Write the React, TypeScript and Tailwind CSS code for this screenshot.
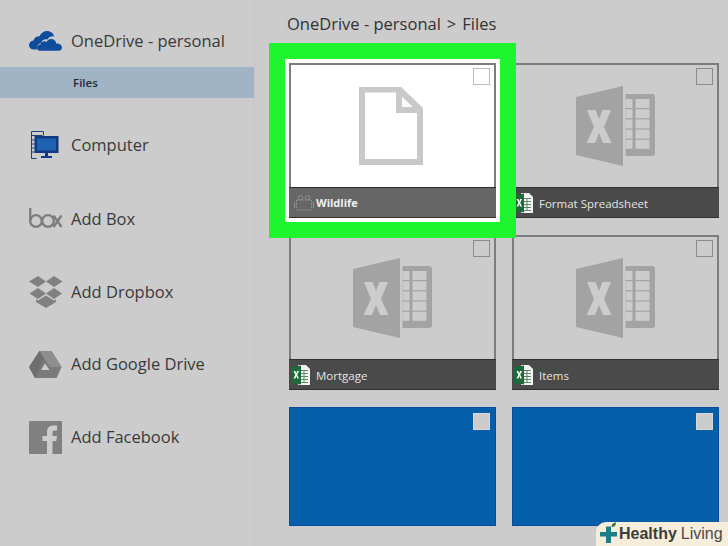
import React from "react";

const Cloud = () => (
  <svg width="33" height="20" viewBox="0 0 33 20" className="shrink-0">
    <path fill="#0f4c9c" d="M5 18.500C1.800 18.500 0 16.500 0 14c0-2.500 2-4.500 4.500-4.600C5.500 6.500 8 5 10.500 5.300 12 2 15 0 18 0c3.500 0 6.500 2.300 7.200 5.500-2.500-.6-5.300.4-6.700 3-2.500-.8-5.800.6-6.500 3.700C9.500 12.500 7.500 15 8 18.500z" />
    <path fill="#0f4c9c" d="M11 19.800c-2 0-3-1.300-3-3 0-2 1.500-3.300 3.500-3.300.4-2.500 3.500-4 6-2.600 1.200-2.500 4-3.600 6.500-2.600 2 .8 3 2.400 3.200 4.200 3-.3 5.800 1.400 5.800 4 0 1.800-1.200 3.300-3.300 3.300z" />
  </svg>
);

const Computer = () => (
  <svg width="30" height="30" viewBox="0 0 30 30" className="shrink-0">
    <path fill="none" stroke="#1c3f73" strokeWidth="1" d="M2.500 28.500V1.500h12v4M2.500 28.500h5M2.500 5.500h11M2.500 10h3M2.500 14h3M2.500 18h3M2.500 22h3" />
    <rect x="5.500" y="6" width="24" height="17" fill="#12397f" />
    <rect x="8" y="8.500" width="19" height="12" fill="#1e62b0" />
    <rect x="16" y="23" width="3" height="3.500" fill="#12397f" />
    <rect x="12" y="26" width="11" height="2" fill="#12397f" />
  </svg>
);

const BoxLogo = () => (
  <svg width="34" height="22" viewBox="0 0 34 22" className="shrink-0">
    <g fill="none" stroke="#7d7d7d" strokeWidth="2.300">
      <path d="M1.200 0v13" />
      <circle cx="7" cy="13" r="5.800" />
      <circle cx="19" cy="13" r="5.800" />
      <path d="M24.500 7.500l8 11.500M32.500 7.500l-8 11.500" />
    </g>
  </svg>
);

const Dropbox = () => (
  <svg width="34" height="32" viewBox="0 0 34 32" className="shrink-0">
    <g fill="#808080">
      <path d="M9 0l8 5.500L9 11 0 5.500zM25 0l8.500 5.500L25 11 17 5.500zM9 12l8 5.500L9 23 .5 17.500zM25 12l8 5.500L25 23l-8-5.500z" />
      <path d="M17 19.500l8 5 2-1.200V26l-10 6-10-6v-2.700l2 1.200z" />
    </g>
  </svg>
);

const Drive = () => (
  <svg width="33" height="28" viewBox="0 0 33 28" className="shrink-0">
    <path fill="#7a7a7a" d="M10.500 0h12l10 16-5 11H6L0 16z" />
    <path fill="#8e8e8e" d="M10.500 0h12l10 16H21z" />
    <path fill="#6f6f6f" d="M0 16L10.500 0 15 8 6 27z" />
    <path fill="#cccccc" d="M16 12.500l4.500 6.500h-8.500z" />
  </svg>
);

const Facebook = () => (
  <svg width="33" height="33" viewBox="0 0 33 33" className="shrink-0">
    <rect width="33" height="33" rx="1" fill="#808080" />
    <path fill="#cccccc" d="M18 33V20h-4.500v-5H18v-4c0-4.500 2.800-6.500 6.500-6.500H28v5h-2.200c-1.800 0-2.300 .8-2.300 2.300V15H28l-.7 5h-3.800v13z" />
  </svg>
);

const ExcelBig = () => (
  <svg width="79" height="80" viewBox="0 0 79 80">
    <g fill="#a3a3a3">
      <path d="M0 11L47 0v80L0 69z" />
      <path d="M49.500 8H76a3 3 0 0 1 3 3v56a3 3 0 0 1-3 3H49.500z" />
    </g>
    <path fill="#cccccc" d="M11 24h8.500l3.500 9 3.500-9H35L28 41l7.500 16H27l-4-10-4 10h-8.500L18 41z" />
    <g fill="#cccccc">
      {[13, 23.200, 33.400, 43.600, 53.800].map((y) => (
        <React.Fragment key={y}>
          <rect x="49.500" y={y} width="7" height="9" />
          <rect x="59.500" y={y} width="14" height="9" />
        </React.Fragment>
      ))}
    </g>
  </svg>
);

const ExcelSmall = () => (
  <svg width="20" height="22" viewBox="0 0 20 22" className="shrink-0">
    <path fill="#f4f4f4" d="M7 1h8l4 4v16H7z" />
    <g fill="#5b8b63">
      <rect x="9" y="6" width="8" height="1" />
      <rect x="9" y="9" width="8" height="1" />
      <rect x="9" y="12" width="8" height="1" />
      <rect x="9" y="15" width="8" height="1" />
      <rect x="9" y="18" width="8" height="1" />
      <rect x="12.500" y="6" width="1" height="13" />
    </g>
    <path fill="#1d6b3a" d="M0 3l10-1.500v19L0 19z" />
    <path fill="#ffffff" d="M2.500 7h1.800l1 2.300L6.300 7h1.700L6.200 10.800 8 14.500H6.300l-1-2.400-1 2.400H2.500l1.900-3.700z" />
  </svg>
);

const Movie = () => (
  <svg width="20" height="16" viewBox="0 0 20 16" className="shrink-0">
    <g fill="none" stroke="#8f8f8f" strokeWidth="1">
      <rect x="2.500" y="5" width="15" height="10" strokeDasharray="2 1" />
      <circle cx="6.500" cy="2.800" r="2.200" />
      <circle cx="13.500" cy="2.800" r="2.200" />
      <path d="M.5 7v6M19.500 7v6" />
    </g>
  </svg>
);

const DocIcon = () => (
  <svg width="64" height="78" viewBox="0 0 64 78">
    <path fill="#c9c9c9" fillRule="evenodd" d="M0 0h42l22 21v57H0zM6 5.500V72h52V26H37V5.500zM43 10v10h11z" />
  </svg>
);

const NavRow = ({ icon, label }: { icon: React.ReactNode; label: string }) => (
  <div className="flex h-[72.6px] items-center">
    <div className="flex w-[71px] justify-start pl-[29px]">{icon}</div>
    <span className="text-[16.500px] leading-none text-[#3a3a3a]">{label}</span>
  </div>
);

const ExcelTile = ({ name }: { name: string }) => (
  <div className="relative flex h-[155px] flex-col border-2 border-b-0 border-[#7d7d7d]">
    <div className="absolute right-[4px] top-[3px] h-[17px] w-[17px] border border-[#8c8c8c]" />
    <div className="flex flex-1 items-center justify-center">
      <ExcelBig />
    </div>
    <div className="-mx-[2px] flex h-[31px] items-center gap-[5px] border-y border-[#303030] bg-[#4a4a4a] pl-[2px]">
      <ExcelSmall />
      <span className="pt-[2px] text-[11.500px] text-[#e4e4e4]">{name}</span>
    </div>
  </div>
);

const BlueTile = () => (
  <div className="relative h-[119px] border border-[#0b4a9e] bg-[#045ea8]">
    <div className="absolute right-[5px] top-[5px] h-[17px] w-[17px] border border-[#d8d8d8] bg-[#cccccc]" />
  </div>
);

export default function App() {
  return (
    <div
      className="relative flex h-[546px] w-[728px] overflow-hidden bg-[#cccccc]"
      style={{ fontFamily: '"Open Sans", "Noto Sans", sans-serif' }}
    >
      <aside className="w-[254px] shrink-0">
        <div className="flex h-[67px] items-center pt-[15px]">
          <div className="flex w-[71px] pl-[29px]">
            <Cloud />
          </div>
          <span className="text-[16.500px] leading-none text-[#3a3a3a]">OneDrive - personal</span>
        </div>
        <div className="flex h-[31px] items-center bg-[#a0b4c6] pl-[73px] text-[11.500px] font-semibold text-[#1f2a33]">
          Files
        </div>
        <div className="pt-[11px]">
          <NavRow icon={<Computer />} label="Computer" />
          <div className="pt-[1.500px]">
            <NavRow icon={<BoxLogo />} label="Add Box" />
            <NavRow icon={<Dropbox />} label="Add Dropbox" />
            <NavRow icon={<Drive />} label="Add Google Drive" />
            <NavRow icon={<Facebook />} label="Add Facebook" />
          </div>
        </div>
      </aside>

      <main className="flex-1 border-l border-[#c4c4c4] pl-[34px] pr-[9px]">
        <div className="-ml-[2px] flex h-[63px] items-start gap-[6px] pt-[14px] text-[16.500px] leading-[20px] text-[#333333]">
          <span>OneDrive - personal</span>
          <span>&gt;</span>
          <span>Files</span>
        </div>
        <div className="grid grid-cols-[207px_207px] gap-x-[16px] gap-y-[17px]">
          <div className="relative z-10 flex h-[155px] flex-col border-2 border-b-0 border-[#7d7d7d] bg-white outline-[16px] outline-offset-[4px] outline-[#1ff52e] [box-shadow:0_0_0_5px_#ffffff]">
            <div className="absolute right-[4px] top-[3px] h-[17px] w-[17px] border border-[#bdbdbd]" />
            <div className="flex flex-1 items-center justify-center pr-[4px]">
              <DocIcon />
            </div>
            <div className="-mx-[2px] flex h-[31px] items-center gap-[2px] border-y border-[#303030] bg-[#666666] pl-[5px]">
              <Movie />
              <span className="pt-[2px] text-[11px] font-bold text-[#f0f0f0]">Wildlife</span>
            </div>
          </div>
          <ExcelTile name="Format Spreadsheet" />
          <ExcelTile name="Mortgage" />
          <ExcelTile name="Items" />
          <BlueTile />
          <BlueTile />
        </div>
      </main>

      <div className="absolute bottom-0 right-0 flex h-[24px] w-[132px] items-center rounded-tl-[10px] bg-[#f6eddb] pl-[3px]">
        <svg width="20" height="24" viewBox="0 0 20 24" className="shrink-0">
          <path fill="#1d7f86" d="M7 4.500h5V10h6v4.500h-6V21H7v-6.500H1V10h6z" />
          <path fill="#2d7a3a" d="M12.500 5c0-3 1.800-4.500 4.500-4.500 0 3-1.800 4.500-4.500 4.500z" />
        </svg>
        <span className="text-[16px] font-bold leading-none text-[#3c3c3c]" style={{ fontFamily: '"Liberation Sans", sans-serif' }}>
          Healthy
        </span>
        <span className="ml-[4px] text-[16px] leading-none text-[#4a4a4a]" style={{ fontFamily: '"Liberation Sans", sans-serif' }}>
          Living
        </span>
      </div>
    </div>
  );
}
